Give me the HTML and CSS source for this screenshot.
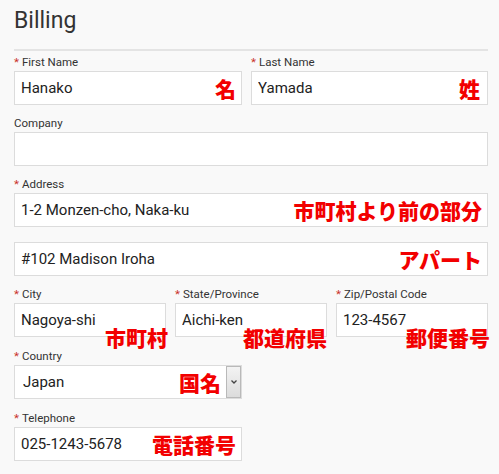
FILE: index.html
```html
<!DOCTYPE html>
<html lang="ja">
<head>
    <meta charset="UTF-8">
    <meta name="viewport" content="width=device-width, initial-scale=1.0">
    <title>Billing</title>
    <link rel="stylesheet" href="styles.css">
</head>
<body>
    <div class="billing">
        <h2 class="billing-title">Billing</h2>

        <div class="row row-two">
            <div class="field field-left">
                <label class="required">First Name</label>
                <div class="input-wrap">
                    <input type="text" value="Hanako">
                    <span class="note note-mid">名</span>
                </div>
            </div>
            <div class="field field-right">
                <label class="required">Last Name</label>
                <div class="input-wrap">
                    <input type="text" value="Yamada">
                    <span class="note note-mid note-far">姓</span>
                </div>
            </div>
        </div>

        <div class="field">
            <label>Company</label>
            <div class="input-wrap">
                <input type="text" value="">
            </div>
        </div>

        <div class="field">
            <label class="required">Address</label>
            <div class="input-wrap">
                <input type="text" value="1-2 Monzen-cho, Naka-ku">
                <span class="note note-mid">市町村より前の部分</span>
            </div>
            <div class="input-wrap second-line">
                <input type="text" value="#102 Madison Iroha">
                <span class="note note-mid">アパート</span>
            </div>
        </div>

        <div class="row row-three">
            <div class="field">
                <label class="required">City</label>
                <div class="input-wrap">
                    <input type="text" value="Nagoya-shi">
                    <span class="note note-low note-out">市町村</span>
                </div>
            </div>
            <div class="field">
                <label class="required">State/Province</label>
                <div class="input-wrap">
                    <input type="text" value="Aichi-ken">
                    <span class="note note-low note-flush">都道府県</span>
                </div>
            </div>
            <div class="field">
                <label class="required">Zip/Postal Code</label>
                <div class="input-wrap">
                    <input type="text" value="123-4567">
                    <span class="note note-low note-out">郵便番号</span>
                </div>
            </div>
        </div>

        <div class="field field-left field-wide-gap">
            <label class="required">Country</label>
            <div class="input-wrap">
                <select>
                    <option>Japan</option>
                </select>
                <span class="select-arrow">
                    <svg width="8" height="6" viewBox="0 0 8 6"><path d="M1.5 1.5 L4 4 L6.5 1.5" fill="none" stroke="#444" stroke-width="1.3"/></svg>
                </span>
                <span class="note note-mid note-select">国名</span>
            </div>
        </div>

        <div class="field field-left">
            <label class="required">Telephone</label>
            <div class="input-wrap">
                <input type="text" value="025-1243-5678">
                <span class="note note-mid">電話番号</span>
            </div>
        </div>
    </div>
</body>
</html>
```

FILE: styles.css
```css
body {
    margin: 0;
    padding: 0;
    background-color: #f9f9f9;
    font-family: Roboto, "Liberation Sans", sans-serif;
    color: #333;
}
.billing {
    width: 474px;
    padding: 0 0 0 14px;
}
.billing-title {
    margin: 0;
    padding-top: 6px;
    font-size: 23px;
    font-weight: 400;
    line-height: 30px;
    color: #333;
    border-bottom: 2px solid #e4e4e4;
    height: 43px;
    margin-bottom: 4px;
}
.row {
    display: flex;
    gap: 9px;
}
.row-three .field {
    width: 152px;
    margin-bottom: 12px;
}
.field {
    margin-bottom: 11px;
}
.field-wide-gap {
    margin-bottom: 12px;
}
.field-left {
    width: 228px;
}
.field-right {
    flex: 1;
}
.field label {
    display: block;
    font-size: 11.5px;
    line-height: 14px;
    margin-bottom: 2px;
    color: #333;
}
.field label.required::before {
    content: "*";
    color: #c9302c;
    margin-right: 3px;
}
.input-wrap {
    position: relative;
}
.second-line {
    margin-top: 15px;
}
.input-wrap input, .input-wrap select {
    display: block;
    box-sizing: border-box;
    width: 100%;
    height: 34px;
    margin: 0;
    padding: 0 6px;
    border: 1px solid #dcdcdc;
    border-radius: 0;
    background: #fff;
    font-family: Roboto, "Liberation Sans", sans-serif;
    font-size: 15px;
    color: #222;
    outline: none;
}
.input-wrap select {
    -webkit-appearance: none;
    appearance: none;
    padding-left: 8px;
}
.select-arrow {
    position: absolute;
    top: 1px;
    right: 1px;
    width: 15px;
    height: 32px;
    box-sizing: border-box;
    border: 1px solid #b9b9b9;
    background: linear-gradient(#f3f3f3, #dcdcdc);
    display: flex;
    align-items: center;
    justify-content: center;
}
.note {
    position: absolute;
    font-family: "Noto Sans CJK JP", sans-serif;
    font-weight: 900;
    font-size: 21px;
    line-height: 22px;
    color: #f20000;
    white-space: nowrap;
}
.note-mid {
    right: 6px;
    top: 50%;
    transform: translateY(-50%);
}
.note-far {
    right: 8px;
}
.note-select {
    right: 21px;
}
.note-low {
    top: 100%;
    transform: translateY(-50%);
}
.note-out {
    right: -2px;
}
.note-flush {
    right: 0;
}
```
